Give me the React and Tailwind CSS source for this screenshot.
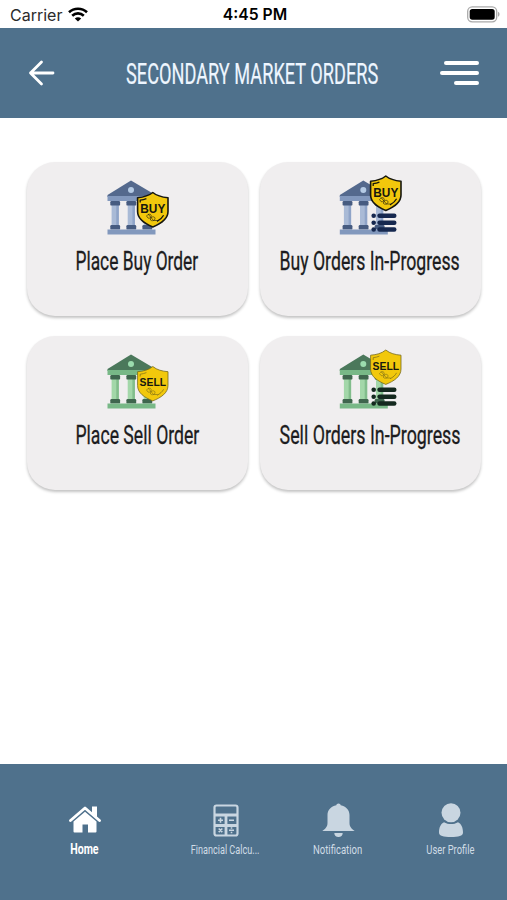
import React from "react";

const blue = { roof: "#54698d", bar: "#8298bd", dark: "#465b80", column: "#a9bad6", shade: "#8fa4c8", dot: "#b5cbe5", list: "#16284f" };
const green = { roof: "#4b785b", bar: "#78b887", dark: "#3f664e", column: "#a3d7a9", shade: "#82bd8c", dot: "#9bdcae", list: "#14291f" };

const orders = [
  { title: "Place Buy Order", badge: "BUY", colors: blue, progress: false, scale: "scale-x-[0.668]" },
  { title: "Buy Orders In-Progress", badge: "BUY", colors: blue, progress: true, scale: "scale-x-[0.68]" },
  { title: "Place Sell Order", badge: "SELL", colors: green, progress: false, scale: "scale-x-[0.678]" },
  { title: "Sell Orders In-Progress", badge: "SELL", colors: green, progress: true, scale: "scale-x-[0.685]" },
];

const Bank = ({ colors }) => (
  <g>
    <path d="M26 6.5 50.5 21v2h-48v-2z" fill={colors.roof} />
    <circle cx="26" cy="16" r="3" fill={colors.dot} />
    <rect x="2.5" y="22" width="48" height="5" fill={colors.bar} />
    {[5.3, 21.4, 37.4].map((x) => (
      <g key={x}>
        <rect x={x + 1.3} y="27" width="7.2" height="28" fill={colors.column} />
        <rect x={x + 6} y="27" width="2.5" height="28" fill={colors.shade} />
        <rect x={x} y="27" width="9.8" height="4.6" rx="1.2" fill={colors.dark} />
        <rect x={x} y="51" width="9.8" height="4.6" rx="1.2" fill={colors.dark} />
      </g>
    ))}
    <rect x="2.5" y="55.5" width="48" height="5" fill={colors.bar} />
  </g>
);

const Shield = ({ label, y }) => {
  const buy = label === "BUY";
  const line = buy ? "#17170f" : "#77691a";

  return (
    <g transform={`translate(0 ${y})`}>
      <path
        d="M47.8 18.5C43.5 22 38.5 23.2 32.6 23.7V37.5c0 7.500 6.800 12 15.200 15.400C56.200 49.500 63 45 63 37.500V23.700c-5.900-.5-10.900-1.700-15.200-5.200z"
        fill="#f2c80c"
        stroke={line}
        strokeWidth={buy ? 1.6 : 0.8}
        strokeLinejoin="round"
      />
      <path d="M35.2 28.500v-2.300c2.400-.3 4.300-.8 6.200-1.600M52 47.300c3-1.500 5.300-3.500 6.600-6" fill="none" stroke={line} strokeWidth={buy ? 1.3 : 0.7} />
      <path d="M41.500 42c1.500-2 3.500-2.500 4.500-1s-1 4-3 3zm4 2.500c1.500-2.500 4.500-2 4.500 0s-3 3-4.500 1.500zM43 40l5.500 6.500h4" fill="none" stroke={line} strokeWidth="0.6" />
      <text
        x="47.8"
        y={buy ? 39 : 38}
        textAnchor="middle"
        textLength={buy ? 25 : 26.5}
        lengthAdjust="spacingAndGlyphs"
        fontSize={buy ? 12 : 10}
        fontWeight="700"
        fontFamily="Liberation Sans, Arial, sans-serif"
        fill="#17170f"
      >
        {label}
      </text>
    </g>
  );
};

const OrderIcon = ({ badge, colors, progress }) => (
  <svg viewBox="0 0 64 62" className="w-16 h-[62px] shrink-0">
    <g transform={progress ? "translate(-0.7 0)" : undefined}>
      <Bank colors={colors} />
    </g>
    {progress &&
      [41.7, 48.7, 55.5].map((y) => (
        <g key={y} fill={colors.list}>
          <circle cx="35.7" cy={y} r="2.3" />
          <rect x="39.3" y={y - 2.2} width="19.2" height="4.4" rx="2.2" />
        </g>
      ))}
    <Shield label={badge} y={progress ? -16.5 : 0} />
  </svg>
);

const OrderCard = ({ order }) => (
  <button className="flex h-[154px] flex-col items-center rounded-[28px] bg-[#f0eeef] pt-3 shadow-[0_2px_3px_rgba(0,0,0,0.24)]">
    <OrderIcon {...order} />
    <span className={`mt-[7px] text-[26px] leading-9 font-normal whitespace-nowrap text-[#1c1c20] [-webkit-text-stroke:0.3px] ${order.scale}`}>
      {order.title}
    </span>
  </button>
);

const StatusBar = () => (
  <div className="flex h-7 items-center justify-between pr-[7px] pl-2.5 font-['Inter',sans-serif] text-black">
    <div className="flex w-24 items-center gap-1.5">
      <span className="pt-px text-[16px] text-[#2b2b2b]">Carrier</span>
      <svg viewBox="0 0 20 15" className="h-[15px] w-5" fill="none" stroke="black" strokeWidth="2.6">
        <path d="M1 5.3C6 .6 14 .6 19 5.3" />
        <path d="M4.2 8.7c3.3-3.1 8.3-3.1 11.6 0" />
        <path d="M10 14.5 6.8 11.4c1.8-1.6 4.6-1.6 6.4 0z" fill="black" stroke="none" />
      </svg>
    </div>
    <span className="pt-0.5 text-[15.7px] font-semibold">4:45 PM</span>
    <div className="flex w-24 justify-end">
      <svg viewBox="0 0 33 17" className="h-[17px] w-[33px]">
        <rect x="0.7" y="0.8" width="29" height="15" rx="4.5" fill="none" stroke="#aaa" strokeWidth="1.3" />
        <rect x="2.7" y="2.9" width="25" height="10.8" rx="2.6" fill="black" />
        <path d="M31 5.8c2 .8 2 4.2 0 5z" fill="#aaa" />
      </svg>
    </div>
  </div>
);

const HomeIcon = () => (
  <svg viewBox="0 0 32 27" className="h-[27px] w-8 -translate-y-px" fill="white">
    <path d="m1.5 14.5L16 2l14.5 12.5" fill="none" stroke="white" strokeWidth="2.8" strokeLinecap="round" strokeLinejoin="round" />
    <path d="M23 .5h5v11l-5-4.5z" />
    <path d="M16 5.7 27.500 15.500v10a1 1 0 0 1-1 1H19v-8h-5.500v8h-8a1 1 0 0 1-1-1v-10z" />
  </svg>
);

const CalculatorIcon = () => (
  <svg viewBox="0 0 26 33" className="h-[33px] w-[26px]" fill="none" stroke="#c9d6e1" strokeWidth="2.2">
    <rect x="1.5" y="1.5" width="23" height="30" rx="2" />
    <path d="M1.500 11h23M13 11v20.500M1.500 21.500h23" strokeWidth="2.8" />
    <path d="M5 16.300h5M7.500 13.800v5M16 16.300h5M5.700 24.500l3.600 3.600M9.300 24.500l-3.600 3.600M16 26.300h5M18.500 23.300v1.500M18.500 27.800v1.500" strokeWidth="1.6" />
  </svg>
);

const BellIcon = () => (
  <svg viewBox="0 0 33 35" className="h-[35px] w-[33px]" fill="#c9d6e1">
    <path d="M16.500.5c1.200 0 2 .8 2.200 1.800C24 3.400 27.500 7 27.500 12v8c0 4 2.500 6 5.200 8H.3C3 26 5.500 24 5.500 20v-8c0-5 3.500-8.600 8.800-9.700.2-1 1-1.800 2.200-1.800zM12.300 30h8.400c0 2.500-1.800 4-4.200 4s-4.200-1.500-4.200-4z" />
  </svg>
);

const UserIcon = () => (
  <svg viewBox="0 0 26 35" className="h-[35px] w-[26px]" fill="#c9d6e1">
    <circle cx="13" cy="9.8" r="9.5" />
    <path d="M6 19.2c4.400 2.500 9.600 2.500 14 0 3.400 1.600 5 5.500 5 10.300C25 33 20.500 34 13 34S1 33 1 29.500c0-4.800 1.600-8.700 5-10.300z" />
  </svg>
);

const tabs = [
  { label: "Home", icon: <HomeIcon />, style: "text-white font-bold text-[14.5px]", scale: "scale-x-[0.73]" },
  { label: "Financial Calcu...", icon: <CalculatorIcon />, style: "text-[#d0dce6] text-[13px]", scale: "scale-x-[0.70]" },
  { label: "Notification", icon: <BellIcon />, style: "text-[#d0dce6] text-[13px]", scale: "scale-x-[0.73]" },
  { label: "User Profile", icon: <UserIcon />, style: "text-[#d0dce6] text-[13px]", scale: "scale-x-[0.72]" },
];

const App = () => {
  return (
    <div className="flex h-screen flex-col overflow-hidden bg-white font-['Roboto',sans-serif]">
      <StatusBar />

      <header className="flex h-[90px] items-center justify-between bg-[#4f718c] px-7">
        <button aria-label="Back" className="w-10">
          <svg viewBox="0 0 27 26" className="h-[26px] w-[27px]" fill="none" stroke="white" strokeWidth="2.8" strokeLinecap="round" strokeLinejoin="round">
            <path d="M13.500 2 2.500 13l11 11M2.500 13H25" />
          </svg>
        </button>
        <div className="flex w-64 justify-center pt-1">
          <h1 className="-translate-x-px scale-x-[0.627] text-[29px] font-normal whitespace-nowrap text-[#eef6ff] [-webkit-text-stroke:0.2px]">
            SECONDARY MARKET ORDERS
          </h1>
        </div>
        <button aria-label="Menu" className="flex w-10 flex-col items-end gap-1.5">
          <span className="h-[4px] w-[35px] rounded-full bg-white" />
          <span className="h-[4px] w-[39px] rounded-full bg-white" />
          <span className="h-[4px] w-[25px] rounded-full bg-white" />
        </button>
      </header>

      <main className="grid flex-1 grid-cols-[221px_221px] content-start justify-center gap-x-3 gap-y-5 pt-11">
        {orders.map((order) => (
          <OrderCard key={order.title} order={order} />
        ))}
      </main>

      <nav className="grid h-[136px] grid-cols-[169px_113px_112px_113px] bg-[#4f718c] pt-[39px]">
        {tabs.map((tab) => (
          <div key={tab.label} className="flex flex-col items-center">
            <div className="flex h-[35px] items-center">{tab.icon}</div>
            <span className={`mt-0.5 leading-5 whitespace-nowrap ${tab.style} ${tab.scale}`}>{tab.label}</span>
          </div>
        ))}
      </nav>
    </div>
  );
};

export default App;
